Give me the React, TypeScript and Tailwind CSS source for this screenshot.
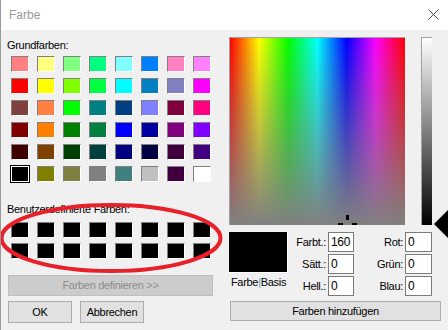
import React from 'react';

const basic = [
  ['#ff8080', '#ffff80', '#80ff80', '#00ff80', '#80ffff', '#0080ff', '#ff80c0', '#ff80ff'],
  ['#ff0000', '#ffff00', '#80ff00', '#00ff40', '#00ffff', '#0080c0', '#8080c0', '#ff00ff'],
  ['#804040', '#ff8040', '#00ff00', '#008080', '#004080', '#8080ff', '#800040', '#ff0080'],
  ['#800000', '#ff8000', '#008000', '#008040', '#0000ff', '#0000a0', '#800080', '#8000ff'],
  ['#400000', '#804000', '#004000', '#004040', '#000080', '#000040', '#400040', '#400080'],
  ['#000000', '#808000', '#808040', '#808080', '#408080', '#c0c0c0', '#400040', '#ffffff'],
];

const Swatch: React.FC<{ color: string; selected?: boolean }> = ({ color, selected }) =>
  selected ? (
    <div className="w-[18px] h-[16px] border border-white outline outline-1 outline-black">
      <div className="w-full h-full" style={{ backgroundColor: color }} />
    </div>
  ) : (
    <div className="w-[18px] h-[16px] border-t border-l border-[#808080] border-b border-r border-b-white border-r-white">
      <div className="w-full h-full" style={{ backgroundColor: color }} />
    </div>
  );

const Field: React.FC<{ label: string; value: string; labelW: string; inputW: string }> = ({ label, value, labelW, inputW }) => (
  <>
    <div className={`${labelW} text-right pr-[2px]`}>{label}</div>
    <div className={`${inputW} h-[20px] border border-[#7a7a7a] bg-white pl-[2px] text-[12px] leading-[18px] text-black`}>
      {value}
    </div>
  </>
);

const App: React.FC = () => {
  return (
    <div className="relative w-[448px] h-[330px] overflow-hidden border-l border-[#9a9a9a] bg-[#f0f0f0] font-['Liberation_Sans',Arial,sans-serif] text-[11px] tracking-[-0.3px] text-black">
      {/* title bar */}
      <div className="h-[30px] bg-white flex items-center justify-between pl-[8px] pr-[9px]">
        <span className="text-[12px] tracking-normal text-[#999999]">Farbe</span>
        <svg width="11" height="11" viewBox="0 0 11 11" className="mt-[-1px]">
          <path d="M0.5 0.5 L10.5 10.5 M10.5 0.5 L0.5 10.5" stroke="#4a4a4a" strokeWidth="1" fill="none" />
        </svg>
      </div>

      <div className="flex pl-[6px] pt-[7px] gap-[16px]">
        {/* left column */}
        <div className="w-[206px] flex flex-col">
          <div className="h-[13px] leading-[13px] mt-[2px]">Grundfarben:</div>
          <div className="ml-[4px] mt-[4px] grid grid-cols-[repeat(8,18px)] gap-x-[8px] gap-y-[6px]">
            {basic.flat().map((c, i) => (
              <Swatch key={i} color={c} selected={i === 40} />
            ))}
          </div>
          <div className="h-[13px] leading-[13px] mt-[21px]">Benutzerdefinierte Farben:</div>
          <div className="ml-[4px] mt-[6px] grid grid-cols-[repeat(8,18px)] gap-x-[8px] gap-y-[5px]">
            {Array.from({ length: 16 }).map((_, i) => (
              <Swatch key={i} color="#000000" />
            ))}
          </div>
          <div className="ml-[1px] mt-[16px] w-[205px] h-[21px] bg-[#cccccc] border border-[#bfbfbf] flex items-center justify-center text-[#8c8c8c]">
            Farben definieren &gt;&gt;
          </div>
          <div className="ml-[1px] mt-[5px] flex gap-[8px]">
            <div className="w-[64px] h-[22px] bg-[#e1e1e1] border border-[#adadad] flex items-center justify-center">OK</div>
            <div className="w-[64px] h-[22px] bg-[#e1e1e1] border border-[#adadad] flex items-center justify-center">Abbrechen</div>
          </div>
        </div>

        {/* right column */}
        <div className="flex flex-col">
          <div className="flex gap-[16px]">
            <div className="relative w-[176px] h-[188px] border-t border-l border-[#a0a0a0] bg-[linear-gradient(to_bottom,rgba(128,128,128,0),#808080),linear-gradient(to_right,#ff0000,#ffff00,#00ff00,#00ffff,#0000ff,#ff00ff,#ff0000)] overflow-hidden">
              <div className="absolute left-[116px] top-[177px] w-[3px] h-[5px] bg-black" />
              <div className="absolute left-[108px] top-[185px] w-[5px] h-[3px] bg-black" />
              <div className="absolute left-[122px] top-[185px] w-[5px] h-[3px] bg-black" />
            </div>
            <div className="relative w-[11px] h-[188px] border-t border-l border-[#a0a0a0] bg-[linear-gradient(to_bottom,#ffffff,#000000)]">
              <svg width="16" height="28" viewBox="0 0 16 28" className="absolute left-[12px] top-[172px]">
                <polygon points="0,14 14,0 16,0 16,28 14,28" fill="#000" />
              </svg>
            </div>
          </div>

          <div className="mt-[7px] flex">
            <div className="flex flex-col items-center w-[59px]">
              <div className="w-[59px] h-[41px] bg-black border-r border-b border-white" />
              <div className="mt-[3px] leading-[13px]">
                Farbe<span className="text-[#5a9ad8]">|</span>Basis
              </div>
            </div>
            <div className="grid grid-cols-[40px_26px_51px_27px] auto-rows-[20px] gap-y-[2px] items-center">
              <Field label="Farbt.:" value="160" labelW="w-[40px]" inputW="w-[26px]" />
              <Field label="Rot:" value="0" labelW="w-[51px]" inputW="w-[27px]" />
              <Field label="Sätt.:" value="0" labelW="w-[40px]" inputW="w-[26px]" />
              <Field label="Grün:" value="0" labelW="w-[51px]" inputW="w-[27px]" />
              <Field label="Hell.:" value="0" labelW="w-[40px]" inputW="w-[26px]" />
              <Field label="Blau:" value="0" labelW="w-[51px]" inputW="w-[27px]" />
            </div>
          </div>

          <div className="ml-[1px] mt-[5px] w-[211px] h-[20px] bg-[#e1e1e1] border border-[#adadad] flex items-center justify-center">
            Farben hinzufügen
          </div>
        </div>
      </div>

      {/* red annotation ellipse */}
      <svg width="448" height="330" className="absolute left-0 top-0 pointer-events-none">
        <ellipse cx="110" cy="238" rx="109.5" ry="33" fill="none" stroke="#e8202a" strokeWidth="4" />
      </svg>
    </div>
  );
};

export default App;
